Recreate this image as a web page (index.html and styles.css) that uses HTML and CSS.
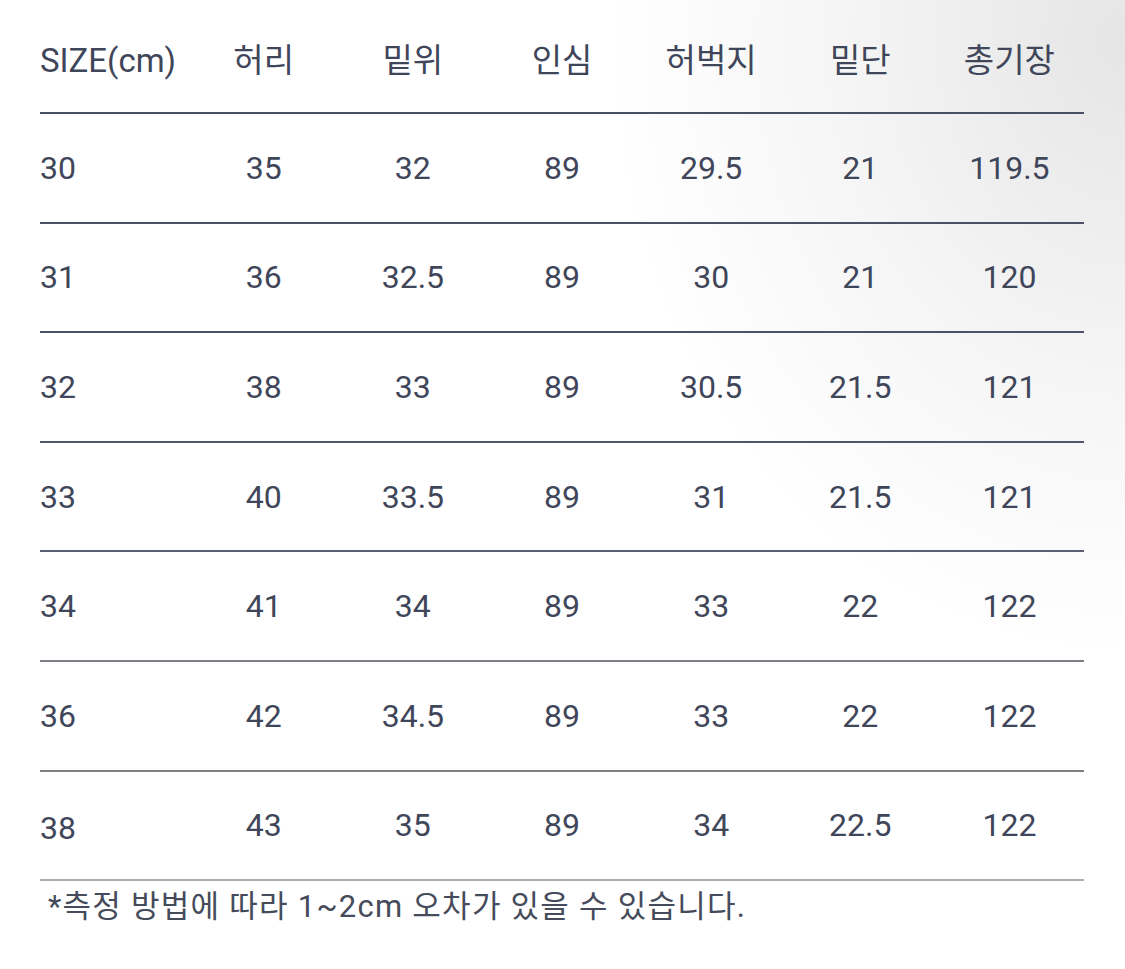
FILE: index.html
```html
<!DOCTYPE html>
<html lang="ko">
<head>
<meta charset="utf-8">
<link rel="stylesheet" href="styles.css">
</head>
<body>
<div class="page">
  <div class="table">
    <div class="row head l1">
      <div class="c first">SIZE(cm)</div><div class="c">허리</div><div class="c">밑위</div><div class="c">인심</div><div class="c">허벅지</div><div class="c">밑단</div><div class="c">총기장</div>
    </div>
    <div class="row l2">
      <div class="c first">30</div><div class="c">35</div><div class="c">32</div><div class="c">89</div><div class="c">29.5</div><div class="c">21</div><div class="c">119.5</div>
    </div>
    <div class="row l3">
      <div class="c first">31</div><div class="c">36</div><div class="c">32.5</div><div class="c">89</div><div class="c">30</div><div class="c">21</div><div class="c">120</div>
    </div>
    <div class="row l4">
      <div class="c first">32</div><div class="c">38</div><div class="c">33</div><div class="c">89</div><div class="c">30.5</div><div class="c">21.5</div><div class="c">121</div>
    </div>
    <div class="row l5">
      <div class="c first">33</div><div class="c">40</div><div class="c">33.5</div><div class="c">89</div><div class="c">31</div><div class="c">21.5</div><div class="c">121</div>
    </div>
    <div class="row l6">
      <div class="c first">34</div><div class="c">41</div><div class="c">34</div><div class="c">89</div><div class="c">33</div><div class="c">22</div><div class="c">122</div>
    </div>
    <div class="row l7">
      <div class="c first">36</div><div class="c">42</div><div class="c">34.5</div><div class="c">89</div><div class="c">33</div><div class="c">22</div><div class="c">122</div>
    </div>
    <div class="row l8 last">
      <div class="c first low">38</div><div class="c">43</div><div class="c">35</div><div class="c">89</div><div class="c">34</div><div class="c">22.5</div><div class="c">122</div>
    </div>
  </div>
  <p class="note">*측정 방법에 따라 1~2cm 오차가 있을 수 있습니다.</p>
</div>
</body>
</html>
```
FILE: styles.css
```css
html, body {
  margin: 0;
  padding: 0;
}
body {
  width: 1125px;
  height: 969px;
  overflow: hidden;
  background: #ffffff;
  font-family: Roboto, "Noto Sans CJK KR", sans-serif;
  color: #3f4659;
}
.page {
  width: 1125px;
  height: 969px;
  box-sizing: border-box;
  padding-left: 40px;
  background:
    radial-gradient(ellipse 520px 620px at 1125px 40px, rgba(0,0,0,0.10), rgba(0,0,0,0.04) 55%, rgba(0,0,0,0) 100%);
}
.table {
  width: 1044px;
}
.row {
  display: grid;
  grid-template-columns: repeat(7, 1fr);
  align-items: center;
  height: 107.6px;
  border-bottom: 2px solid #4c5366;
  font-size: 32px;
}
.row.head {
  height: 104px;
  padding-top: 8px;
  font-size: 33px;
}
.c {
  text-align: center;
  line-height: 1;
}
.c.first {
  text-align: left;
}
.c.low {
  position: relative;
  top: 3px;
}
.l1 { border-color: #485064; }
.l2 { border-color: #4a5164; }
.l3 { border-color: #4c5366; }
.l4 { border-color: #50576a; }
.l5 { border-color: #596072; }
.l6 { border-color: #7c7f86; }
.l7 { border-color: #7e8084; }
.l8 { border-color: #acadb0; }
.note {
  margin: 0;
  padding-left: 8px;
  padding-top: 7px;
  font-size: 31px;
  letter-spacing: 1.25px;
  line-height: 38px;
  color: #454b5a;
}
```
